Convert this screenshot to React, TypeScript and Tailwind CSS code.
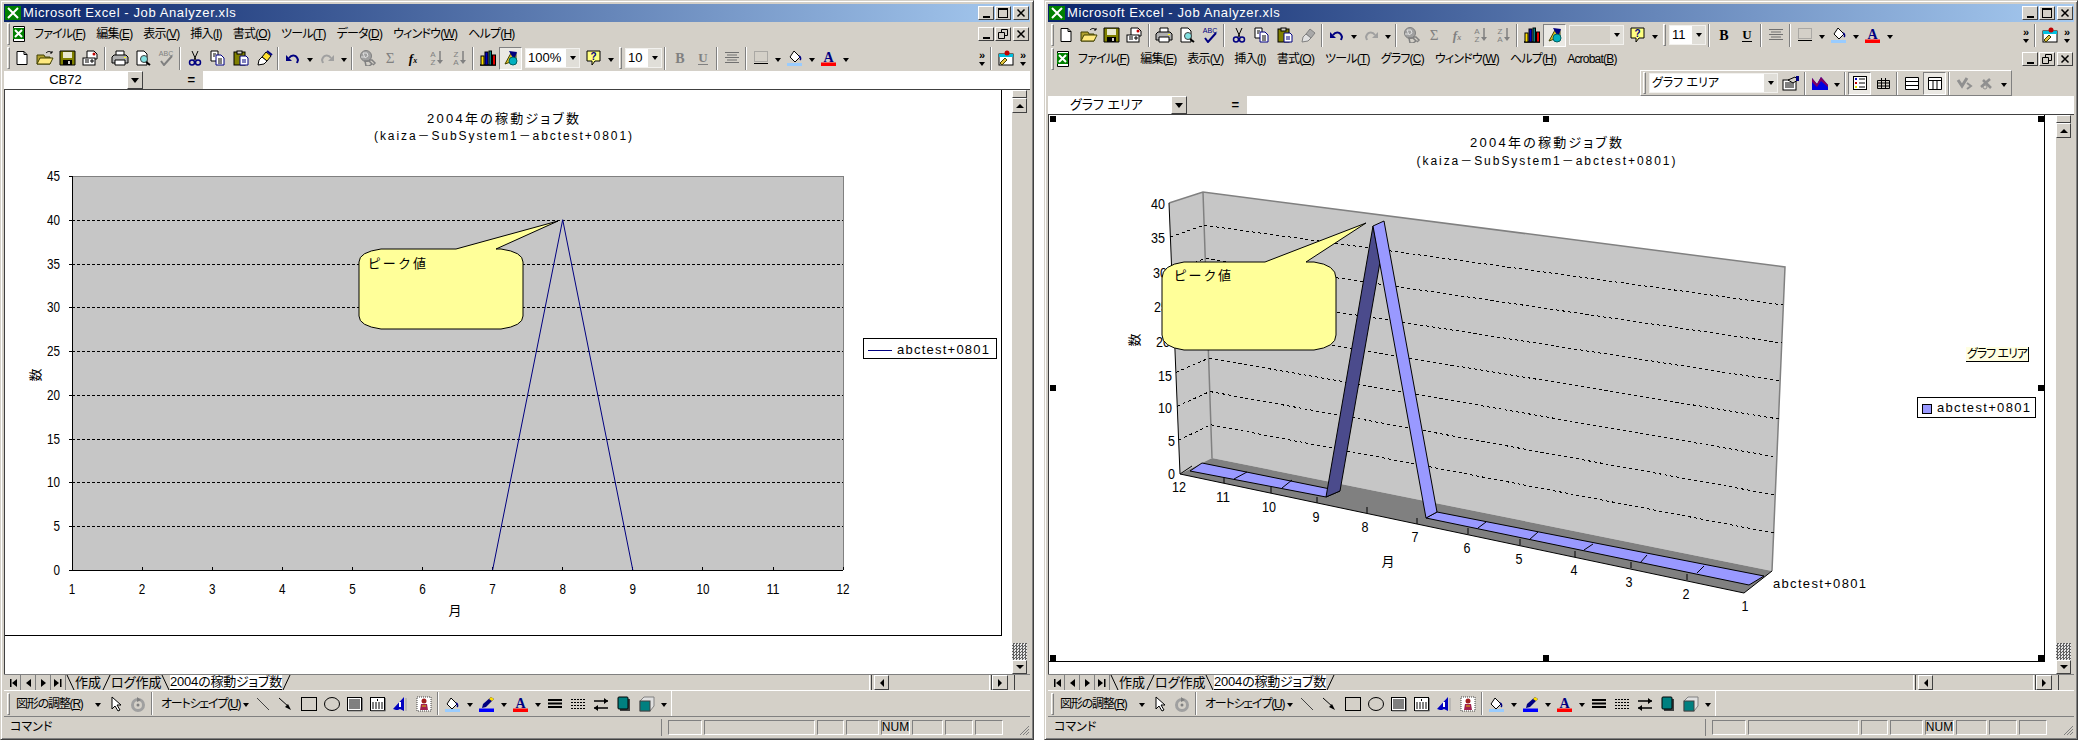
import type { ReactNode } from 'react'

const FACE = 'bg-[#d4d0c8]'
const RAISED = 'border border-t-white border-l-white border-r-[#404040] border-b-[#404040]'
const SUNKEN = 'border border-t-[#808080] border-l-[#808080] border-r-white border-b-white'

const ICONS: Record<string, ReactNode> = {
  new: <><path d="M5 1.5h7l3 3v10H5z" fill="#fff" stroke="#000" /><path d="M12 1.500v3h3" fill="none" stroke="#000" /></>,
  open: <><path d="M2 14V5h7l1 2h5v7z" fill="#b0a030" stroke="#404000" /><path d="M2 14l3-6h13l-3 6z" fill="#ffe97f" stroke="#404000" /><path d="M11 3c2-2 4-2 6 0M17 1v2h-2" fill="none" stroke="#000" /></>,
  save: <><path d="M2 1h15v14H2z" fill="#808000" stroke="#000" /><rect x="5" y="2" width="9" height="6" fill="#e8e8d0" /><rect x="5" y="10" width="9" height="5" fill="#000" /><rect x="10" y="11" width="2" height="3" fill="#d4d0c8" /></>,
  mail: <><path d="M6 1h7l3 3v5H6z" fill="#fff" stroke="#000" /><circle cx="13" cy="4" r="1.500" fill="#c00000" /><rect x="2" y="8" width="12" height="7" fill="#fff" stroke="#000" /><path d="M4 10h4M4 12h4M10 10h2v2h-2z" stroke="#000" fill="none" /></>,
  print: <><path d="M6 1h8v5H6z" fill="#fff" stroke="#000" /><path d="M2 7l2-2h12l2 2v6H2z" fill="#b0b0b0" stroke="#000" /><path d="M5 10h10v5H5z" fill="#fff" stroke="#000" /><rect x="14" y="7" width="2" height="1" fill="#ffff00" /></>,
  preview: <><path d="M4 1h7l3 3v11H4z" fill="#fff" stroke="#000" /><circle cx="11" cy="9" r="3.500" fill="#80e0e0" stroke="#404040" /><path d="M13 12l4 3" stroke="#000" strokeWidth="2" /></>,
  spell: <><text x="10" y="6" fontSize="7" textAnchor="middle" fill="#000080">ABC</text><path d="M5 11l3 4 8-9" fill="none" stroke="#000080" strokeWidth="2" /></>,
  spellOff: <><text x="10" y="6" fontSize="7" textAnchor="middle" fill="#808080">ABC</text><path d="M5 11l3 4 8-9" fill="none" stroke="#808080" strokeWidth="2" /></>,
  cut: <><path d="M7 1l4 9M13 1L9 10" stroke="#000" fill="none" /><circle cx="7" cy="12.500" r="2.500" fill="none" stroke="#000080" strokeWidth="1.500" /><circle cx="13" cy="12.500" r="2.500" fill="none" stroke="#000080" strokeWidth="1.500" /></>,
  copy: <><path d="M3 1h7v10H3z" fill="#fff" stroke="#000" /><path d="M8 5h5l3 3v7H8z" fill="#fff" stroke="#000080" /><path d="M5 4h3M5 6h2M10 9h4M10 11h4M10 13h4" stroke="#000" /></>,
  paste: <><rect x="3" y="2" width="11" height="13" fill="#808000" stroke="#000" /><rect x="6" y="1" width="5" height="3" fill="#d4d0c8" stroke="#000" /><path d="M9 6h6l2 2v7H9z" fill="#fff" stroke="#000080" /><path d="M11 10h4M11 12h4" stroke="#000080" /></>,
  brush: <><path d="M12 2l5 4-4 5-5-4z" fill="#ffe030" stroke="#000" /><path d="M8 7l5 4-3 3-6 1 1-5z" fill="#fff" stroke="#000" /><path d="M13 1l5 4" stroke="#000080" strokeWidth="2" /></>,
  brushOff: <><path d="M12 2l5 4-4 5-5-4z" fill="#a8a8a8" stroke="#808080" /><path d="M8 7l5 4-3 3-6 1 1-5z" fill="#e0e0e0" stroke="#808080" /></>,
  undo: <><path d="M6 8c3-4 8-3 9 2l-1 3" fill="none" stroke="#000080" strokeWidth="2" /><path d="M3 5v6h6z" fill="#000080" /></>,
  redo: <><path d="M14 8c-3-4-8-3-9 2l1 3" fill="none" stroke="#a0a0a0" strokeWidth="2" /><path d="M17 5v6h-6z" fill="#a0a0a0" /></>,
  web: <><circle cx="9" cy="6" r="5.500" fill="#a0a0a0" stroke="#808080" /><path d="M6 3h4l1 3-3 2zM4 7h3" stroke="#e0e0e0" fill="none" /><path d="M8 11h4l3 3-3 2H9zM12 10h3l3 3-2 2" fill="none" stroke="#808080" strokeWidth="1.500" /></>,
  sum: <text x="10" y="13" fontSize="15" textAnchor="middle" fill="#808080" fontFamily="Liberation Serif">Σ</text>,
  fx: <text x="10" y="13" fontSize="13" textAnchor="middle" fill="#000" fontFamily="Liberation Serif" fontStyle="italic" fontWeight="bold">f<tspan fontSize="8">x</tspan></text>,
  fxOff: <text x="10" y="13" fontSize="13" textAnchor="middle" fill="#808080" fontFamily="Liberation Serif" fontStyle="italic" fontWeight="bold">f<tspan fontSize="8">x</tspan></text>,
  az: <><text x="7" y="7" fontSize="8" textAnchor="middle" fill="#808080">A</text><text x="7" y="15" fontSize="8" textAnchor="middle" fill="#808080">Z</text><path d="M14 1v10" stroke="#808080" strokeWidth="1.500" /><path d="M11 10h6l-3 4z" fill="#808080" /></>,
  za: <><text x="7" y="7" fontSize="8" textAnchor="middle" fill="#808080">Z</text><text x="7" y="15" fontSize="8" textAnchor="middle" fill="#808080">A</text><path d="M14 1v10" stroke="#808080" strokeWidth="1.500" /><path d="M11 10h6l-3 4z" fill="#808080" /></>,
  chart: <><path d="M2 15h16" stroke="#000" strokeWidth="1.500" /><rect x="3" y="6" width="3" height="9" fill="#ffe000" stroke="#000" /><rect x="7" y="2" width="3" height="13" fill="#0000c0" stroke="#000" /><rect x="11" y="1" width="2.500" height="14" fill="#008080" stroke="#000" /><rect x="14.500" y="5" width="3" height="10" fill="#e00000" stroke="#000" /></>,
  drawing: <><path d="M4 14L10 3h5v7z" fill="#e0c020" stroke="#404000" /><path d="M8 1l8 1-3 8z" fill="#000080" /><circle cx="12" cy="11" r="4" fill="#00b0c0" stroke="#006060" /></>,
  help: <><path d="M3 1h13v10h-5l-3 4v-4H3z" fill="#ffff80" stroke="#000" /><text x="9.500" y="10" fontSize="10" textAnchor="middle" fill="#000080" fontWeight="bold">?</text></>,
  bold: <text x="10" y="13" fontSize="14" textAnchor="middle" fontWeight="bold" fontFamily="Liberation Serif">B</text>,
  boldOff: <text x="10" y="13" fontSize="14" textAnchor="middle" fontWeight="bold" fill="#808080" fontFamily="Liberation Serif">B</text>,
  under: <><text x="10" y="12" fontSize="13" textAnchor="middle" fontWeight="bold" fontFamily="Liberation Serif">U</text><path d="M5 14.500h10" stroke="#000" /></>,
  underOff: <><text x="10" y="12" fontSize="13" textAnchor="middle" fontWeight="bold" fill="#808080" fontFamily="Liberation Serif">U</text><path d="M5 14.500h10" stroke="#808080" /></>,
  align: <path d="M3 2.500h14M5 5h10M3 7.500h14M5 10h10M3 12.500h14" stroke="#707070" />,
  border: <><rect x="3.500" y="1.500" width="13" height="10" fill="none" stroke="#808080" strokeDasharray="1 1" /><path d="M3 13.500h14" stroke="#000" /></>,
  fill: <><path d="M9 1l6 6-5 5-5-5z" fill="#fff" stroke="#000" /><path d="M14 6c2 1 2 3 1 4" stroke="#000080" fill="none" strokeWidth="1.500" /><rect x="2" y="13" width="15" height="3" fill="#99ccff" /></>,
  color: <><text x="9.500" y="12" fontSize="14" textAnchor="middle" fontWeight="bold" fill="#000080" fontFamily="Liberation Serif">A</text><rect x="2" y="12.500" width="15" height="3.500" fill="#ff0000" /></>,
  newbar: <><rect x="3" y="4" width="14" height="11" fill="#fff" stroke="#000" /><rect x="3" y="4" width="14" height="3" fill="#00c0e0" /><circle cx="11" cy="3" r="2.500" fill="#c00000" /><path d="M4 13l5-5 2 2-5 5z" fill="#e0c040" stroke="#404000" /></>,
  cursor: <path d="M7 1v12l3-3 3 5 2-1-3-5h4z" fill="#fff" stroke="#000" />,
  rotate: <><circle cx="10" cy="9" r="5.500" fill="none" stroke="#a0a0a0" strokeWidth="3" /><circle cx="10" cy="9" r="1.500" fill="#808080" /><path d="M9 1l4 3-4 2z" fill="#808080" /></>,
  line: <path d="M4 2l12 12" stroke="#404040" />,
  arrow: <><path d="M3 2l10 9" stroke="#000" /><path d="M15 14l-6-3 3-3z" fill="#000" /></>,
  rect: <rect x="2.500" y="1.500" width="15" height="13" fill="none" stroke="#000" />,
  oval: <ellipse cx="10" cy="8" rx="7.500" ry="6.500" fill="none" stroke="#000" />,
  textbox: <><rect x="2.500" y="1.500" width="14" height="13" fill="#fff" stroke="#000" /><path d="M4 4h11M4 6h11M4 8h11M4 10h11M4 12h11" stroke="#000" /><path d="M17.500 2v13H3" stroke="#808080" fill="none" /></>,
  vtext: <><rect x="2.500" y="1.500" width="14" height="13" fill="#fff" stroke="#000" /><path d="M5 6v7M8 6v7M11 6v7M14 6v7M9.500 3v2" stroke="#000" /><path d="M17.500 2v13H3" stroke="#808080" fill="none" /></>,
  wordart: <><path d="M2 13L13 1v14l-4-2-2 1h-2z" fill="#0000c0" /><path d="M9 6v5" stroke="#fff" strokeWidth="2" /><path d="M15 2v13" stroke="#a0a0a0" /></>,
  clip: <><rect x="3" y="1" width="14" height="14" fill="#fff" stroke="#404040" strokeDasharray="1 1" /><circle cx="10" cy="5" r="2.500" fill="#a02020" /><path d="M7 8h6l1 6H6z" fill="#a02050" /><path d="M8 10h4" stroke="#e0c000" /></>,
  fillDraw: <><path d="M8 2l6 6-5 5-5-5z" fill="#fff" stroke="#000" /><path d="M13 7c2 1 2 3 1 4" stroke="#000080" fill="none" strokeWidth="1.500" /><rect x="2" y="13" width="15" height="3" fill="#99ccff" /></>,
  pen: <><path d="M14 1l3 2-8 8-4 1 1-4z" fill="#000080" /><path d="M14 1l3 2-2 2-3-2z" fill="#ffe000" /><rect x="2" y="12.500" width="15" height="3.500" fill="#0000ff" /></>,
  lineStyle: <path d="M3 4h14M3 7.500h14M3 11h14" stroke="#000" strokeWidth="2" />,
  dash: <><path d="M3 3.500h14M3 6.500h14M3 9.500h14M3 12.500h14" stroke="#000" strokeDasharray="2 1" /></>,
  arrows: <><path d="M3 5h14M3 12h14" stroke="#000" strokeWidth="1.500" /><path d="M13 2l4 3-4 3zM7 9l-4 3 4 3z" fill="#000" /></>,
  shadow: <><rect x="6" y="3" width="10" height="12" fill="#404040" strokeDasharray="1 1" /><rect x="4" y="1" width="10" height="12" rx="1" fill="#008080" stroke="#000" /></>,
  d3: <><path d="M3 5l4-4h10v9l-4 5H3z" fill="#e0e0e0" stroke="#808080" /><rect x="3" y="5" width="10" height="10" fill="#008080" stroke="#404040" /></>,
  props: <><rect x="2" y="5" width="13" height="10" fill="#fff" stroke="#000" /><path d="M4 8h9M4 10h9M4 12h9" stroke="#000" /><path d="M7 5l7-3 3 3-5 3z" fill="#d4d0c8" stroke="#000" /><rect x="15" y="1" width="3" height="5" fill="#000080" /></>,
  chartType: <><path d="M2 15V3l5 6 4-7 7 8v5z" fill="#0000e0" /><path d="M2 3l5 6 4-7 7 8v2l-7-6-4 6-5-5z" fill="#800060" /></>,
  legend: <><rect x="3.500" y="1.500" width="13" height="13" fill="#fff" stroke="#000" /><rect x="5" y="3" width="2" height="2" fill="#0000c0" /><rect x="5" y="7" width="2" height="2" fill="#c00000" /><rect x="5" y="11" width="2" height="2" fill="#e0e000" /><path d="M9 4h6M9 8h6M9 12h6" stroke="#000" /></>,
  table: <path d="M4.500 5.500h12v8h-12zM4.500 8h12M4.500 11h12M8.500 3v11M12.500 3v11" fill="none" stroke="#000" />,
  byRow: <path d="M3.500 2.500h13v12h-13zM3.500 6.500h13M3.500 10.500h13" fill="#fff" stroke="#000" />,
  byCol: <path d="M3.500 2.500h13v12h-13zM3.500 5.500h13M8 5.500v9M12 5.500v9" fill="#fff" stroke="#000" />,
  angleA: <><path d="M4 5l4 6 5-8" fill="none" stroke="#909090" strokeWidth="3" /><path d="M13 8l4 3-4 3" fill="none" stroke="#909090" strokeWidth="2" /></>,
  angleB: <><path d="M4 12l9-8M6 5l8 8" fill="none" stroke="#909090" strokeWidth="2.500" /><circle cx="8" cy="12" r="2" fill="none" stroke="#909090" /></>,
}

function Btn({ name, on }: { name: string; on?: boolean }) {
  return (
    <div className={`flex h-[23px] w-[23px] shrink-0 items-center justify-center ${on ? 'border border-t-[#808080] border-l-[#808080] border-r-white border-b-white bg-[#ebe9e4]' : ''}`}>
      <svg viewBox="0 0 20 16" width="20" height="16">{ICONS[name]}</svg>
    </div>
  )
}

function Dd() {
  return (
    <div className="flex h-[23px] w-[11px] shrink-0 items-center justify-center">
      <div className="mt-[3px] h-0 w-0 border-x-[3px] border-t-[4px] border-x-transparent border-t-black" />
    </div>
  )
}

function Sep() {
  return (
    <div className="flex h-[23px] w-[6px] shrink-0 justify-center">
      <div className="h-full w-[2px] border-l border-r border-l-[#808080] border-r-white" />
    </div>
  )
}

function Grip() {
  return <div className="h-[22px] w-[3px] shrink-0 border border-t-white border-l-white border-r-[#808080] border-b-[#808080]" />
}

function Chevrons({ className = '' }: { className?: string }) {
  return (
    <div className={`flex h-[23px] w-[12px] shrink-0 flex-col items-center justify-center ${className}`}>
      <span className="text-[11px] leading-[10px] font-bold">»</span>
      <div className="mt-[2px] h-0 w-0 border-x-[3px] border-t-[4px] border-x-transparent border-t-black" />
    </div>
  )
}

function Combo({ w, value, size = 'text-[13px]' }: { w: string; value?: string; size?: string }) {
  return (
    <div className={`flex h-[20px] shrink-0 items-center border border-[#f2f1ee] bg-[#d4d0c8] ${w}`}>
      <div className={`flex h-full flex-1 items-center overflow-hidden pl-[2px] whitespace-nowrap ${value ? 'bg-white' : 'bg-transparent'} ${size}`}>{value}</div>
      <div className="flex h-full w-[13px] items-center justify-center bg-[#e0ded8]">
        <div className="h-0 w-0 border-x-[3px] border-t-[4px] border-x-transparent border-t-black" />
      </div>
    </div>
  )
}

function Standard({ second, height }: { second?: boolean; height: string }) {
  return (
    <div className={`flex shrink-0 items-center pl-[3px] pr-[1px] ${height} ${FACE}`}>
      <Grip />
      <Btn name="new" /><Btn name="open" /><Btn name="save" /><Btn name="mail" />
      <Sep />
      <Btn name="print" /><Btn name="preview" /><Btn name={second ? 'spell' : 'spellOff'} />
      <Sep />
      <Btn name="cut" /><Btn name="copy" /><Btn name="paste" /><Btn name={second ? 'brushOff' : 'brush'} />
      <Sep />
      <Btn name="undo" /><Dd /><Btn name="redo" /><Dd />
      <Sep />
      <Btn name="web" /><Btn name="sum" /><Btn name={second ? 'fxOff' : 'fx'} /><Btn name="az" /><Btn name="za" />
      <Sep />
      <Btn name="chart" /><Btn name="drawing" on />
      <div className="ml-[3px] mr-[2px]"><Combo w="w-[55px]" value={second ? '' : '100%'} /></div>
      <Btn name="help" /><Dd />
      <div className="mx-[3px]"><Grip /></div>
      <Combo w="w-[37px]" value={second ? '11' : '10'} />
      <Sep />
      <Btn name={second ? 'bold' : 'boldOff'} /><Btn name={second ? 'under' : 'underOff'} />
      <Sep />
      <Btn name="align" />
      <Sep />
      <Btn name="border" /><Dd /><Btn name="fill" /><Dd /><Btn name="color" /><Dd />
      <Chevrons className="ml-auto" />
      <Sep />
      <Btn name="newbar" />
      <Chevrons />
    </div>
  )
}

function WinButtons({ restore }: { restore?: boolean }) {
  const box = `flex h-[14px] w-[16px] items-center justify-center ${RAISED} ${FACE}`
  return (
    <div className="ml-auto flex gap-[1px] pr-[1px]">
      <div className={`${box} items-end pb-[1px]`}><div className="h-[2px] w-[7px] bg-black" /></div>
      <div className={box}>
        {restore ? (
          <svg viewBox="0 0 10 10" width="10" height="10"><path d="M3.500 3V.5h6v6H7M.5 3.500h6v6h-6z" fill="none" stroke="#000" /></svg>
        ) : (
          <div className="h-[10px] w-[10px] border border-t-2 border-black" />
        )}
      </div>
      <div className={`${box} ml-[1px]`}>
        <svg viewBox="0 0 10 10" width="10" height="10"><path d="M1.500 1.500l7 7M8.500 1.500l-7 7" stroke="#000" strokeWidth="1.500" /></svg>
      </div>
    </div>
  )
}

function XlIcon({ doc }: { doc?: boolean }) {
  return (
    <svg viewBox="0 0 16 16" width="16" height="16" className="shrink-0">
      {doc && <path d="M1.500.5h11v15h-11z" fill="#fff" stroke="#000" />}
      <rect x={doc ? 1 : 0} y={doc ? 2 : 1} width="11" height="11" fill="#008000" />
      {!doc && <rect x="0" y="1" width="16" height="14" fill="#008000" />}
      <path d={doc ? 'M3 4l7 7M10 4l-7 7' : 'M3 3l10 10M13 3L3 13'} stroke="#fff" strokeWidth="2" />
    </svg>
  )
}

function Title() {
  return (
    <div className="flex h-[18px] shrink-0 items-center gap-[2px] bg-[linear-gradient(90deg,#0a246a,#a6caf0)] pl-[1px] text-[13px] text-white">
      <XlIcon />
      <span className="tracking-[0.6px] whitespace-nowrap">Microsoft Excel - Job Analyzer.xls</span>
      <WinButtons />
    </div>
  )
}

function Menu({ items, height }: { items: [string, string][]; height: string }) {
  return (
    <div className={`flex shrink-0 items-center pl-[3px] text-[12px] ${height} ${FACE}`}>
      <Grip />
      <div className="ml-[2px] mr-[6px]"><XlIcon doc /></div>
      <div className="flex gap-[11px] tracking-[-0.8px]">
        {items.map(([t, k]) => <span key={t} className="whitespace-nowrap">{t}(<u>{k}</u>)</span>)}
      </div>
      <WinButtons restore />
    </div>
  )
}

function Formula({ name, center }: { name: string; center?: boolean }) {
  return (
    <div className={`flex h-[18px] shrink-0 items-stretch ${FACE}`}>
      <div className={`flex w-[123px] items-center bg-white text-[13px] ${center ? 'justify-center' : 'pl-[22px]'}`}>{name}</div>
      <div className={`flex w-[16px] items-center justify-center ${RAISED} ${FACE}`}>
        <div className="h-0 w-0 border-x-[4px] border-t-[5px] border-x-transparent border-t-black" />
      </div>
      <div className="flex w-[60px] items-center justify-end pr-[8px] text-[13px] font-bold">=</div>
      <div className="flex-1 bg-white" />
    </div>
  )
}

function Arrow({ dir, className = '' }: { dir: 'up' | 'down' | 'left' | 'right'; className?: string }) {
  const shape = {
    up: 'border-x-[4px] border-b-[4px] border-x-transparent border-b-black',
    down: 'border-x-[4px] border-t-[4px] border-x-transparent border-t-black',
    left: 'border-y-[4px] border-r-[4px] border-y-transparent border-r-black',
    right: 'border-y-[4px] border-l-[4px] border-y-transparent border-l-black',
  }[dir]
  return (
    <div className={`flex shrink-0 items-center justify-center ${RAISED} ${FACE} ${className}`}>
      <div className={`h-0 w-0 ${shape}`} />
    </div>
  )
}

function VScroll({ top }: { top: number }) {
  return (
    <div className={`flex h-full w-[18px] shrink-0 flex-col border-r-[3px] border-[#d4d0c8]`}>
      <div className={`shrink-0 ${RAISED} ${FACE}`} style={{ height: top }} />
      <Arrow dir="up" className="h-[15px]" />
      <div className={`flex-1 ${FACE}`} />
      <div className="h-[17px] shrink-0 bg-[repeating-conic-gradient(#606060_0_25%,#e8e8e8_0_50%)] bg-[length:3px_3px]" />
      <Arrow dir="down" className="h-[14px]" />
    </div>
  )
}

function Slash({ back }: { back?: boolean }) {
  return (
    <svg viewBox="0 0 9 15" width="9" height="15" className="shrink-0">
      <path d={back ? 'M1 0l7 15' : 'M8 0L1 15'} stroke="#000" fill="none" />
    </svg>
  )
}

const NAV_ARROWS = ['M2 1h1.500v8H2zM9 1v8L4 5z', 'M8 1v8L3 5z', 'M3 1v8l5-4z', 'M1 1v8l5-4zM7 1h1.500v8H7z']

function Tabs() {
  return (
    <div className={`flex h-[16px] shrink-0 items-center border-t border-[#808080] ${FACE}`}>
      <div className="ml-[2px] flex items-center">
        {NAV_ARROWS.map(d => (
          <div key={d} className="flex h-[15px] w-[15px] items-center justify-center border-r border-[#808080]">
            <svg viewBox="0 0 10 10" width="10" height="10"><path d={d} fill="#000" /></svg>
          </div>
        ))}
      </div>
      <Slash back />
      <span className="w-[27px] text-[13px] leading-none whitespace-nowrap">作成</span>
      <Slash />
      <span className="w-[50px] text-[13px] leading-none whitespace-nowrap">ログ作成</span>
      <Slash back />
      <span className="h-[15px] w-[112px] border-b border-black bg-white text-[13px] leading-[14px] tracking-[-0.2px] whitespace-nowrap">2004の稼動ジョブ数</span>
      <Slash />
      <div className="ml-auto flex h-full items-center pr-[6px]">
        <div className="mr-[2px] h-[15px] w-[3px] border-x border-l-white border-r-[#404040]" />
        <Arrow dir="left" className="h-[15px] w-[15px]" />
        <div className="w-[100px]" />
        <div className="h-[15px] w-[3px] border-x border-l-white border-r-[#404040]" />
        <Arrow dir="right" className="h-[15px] w-[16px]" />
      </div>
      <div className="mr-[15px] h-[15px] w-[1px] bg-[#404040]" />
    </div>
  )
}

function DrawBar() {
  return (
    <div className={`flex h-[26px] shrink-0 items-center border-t border-white ${FACE}`}>
      <div className="flex h-full w-[668px] items-center border-r border-white pl-[3px] text-[12px]">
        <Grip />
        <span className="ml-[6px] w-[76px] tracking-[-1.2px] whitespace-nowrap">図形の調整(<u>R</u>)</span>
        <Dd />
        <Btn name="cursor" /><Btn name="rotate" />
        <Sep />
        <span className="ml-[6px] w-[79px] tracking-[-1.2px] whitespace-nowrap">オートシェイプ(<u>U</u>)</span>
        <Dd />
        <Btn name="line" /><Btn name="arrow" /><Btn name="rect" /><Btn name="oval" />
        <Btn name="textbox" /><Btn name="vtext" /><Btn name="wordart" /><Btn name="clip" />
        <Sep />
        <Btn name="fillDraw" /><Dd /><Btn name="pen" /><Dd /><Btn name="color" /><Dd />
        <Btn name="lineStyle" /><Btn name="dash" /><Btn name="arrows" /><Btn name="shadow" /><Btn name="d3" /><Dd />
      </div>
    </div>
  )
}

function Status() {
  const cells: [string, string][] = [
    ['w-[34px]', ''], ['w-[111px]', ''], ['w-[27px]', ''], ['w-[33px]', ''],
    ['w-[29px]', 'NUM'], ['w-[31px]', ''], ['w-[28px]', ''], ['w-[28px]', ''],
  ]
  return (
    <div className={`flex h-[21px] shrink-0 items-center border-t border-[#808080] pl-[6px] text-[12px] ${FACE}`}>
      <span className="w-[50px] whitespace-nowrap">コマンド</span>
      <div className="ml-[601px] mr-[6px] h-[17px] w-[1px] bg-[#808080]" />
      <div className="flex gap-[2px]">
        {cells.map(([w, t], i) => (
          <div key={i} className={`flex h-[15px] items-center justify-center leading-none ${SUNKEN} ${w}`}>{t}</div>
        ))}
      </div>
      <svg viewBox="0 0 12 12" width="12" height="12" className="ml-auto mt-[6px] shrink-0">
        <path d="M11 2L2 11M11 5l-6 6M11 8l-3 3" stroke="#808080" />
      </svg>
    </div>
  )
}

function Label({ x, y, t, anchor = 'middle', w, size = 14 }: { x: number; y: number; t: string; anchor?: 'start' | 'middle' | 'end'; w?: number; size?: number }) {
  return (
    <text x={x} y={y} textAnchor={anchor} dominantBaseline="central" fontSize={size} textLength={w} lengthAdjust={w ? 'spacing' : undefined}>{t}</text>
  )
}

function Num({ x, y, t, anchor = 'middle', cw = 6.500 }: { x: number; y: number; t: string; anchor?: 'start' | 'middle' | 'end'; cw?: number }) {
  return (
    <text x={x} y={y} textAnchor={anchor} dominantBaseline="central" fontSize={14} textLength={t.length * cw} lengthAdjust="spacingAndGlyphs">{t}</text>
  )
}

const px = (n: number) => 72 + (n - 1) * 70.1
const py = (v: number) => 570 - v * 8.756

function LineChart() {
  return (
    <svg viewBox="5 90 998 546" width="998" height="546" className="block">
      <Label x={503} y={118} t="2004年の稼動ジョブ数" w={152} size={13} />
      <Label x={503} y={136} t="(kaiza－SubSystem1－abctest+0801)" w={258} size={12} />
      <g shapeRendering="crispEdges">
        <rect x={72} y={176} width={771} height={394} fill="#c6c6c6" />
        <path d="M72 176h771v394" fill="none" stroke="#808080" />
        {[5, 10, 15, 20, 25, 30, 35, 40].map(v => (
          <line key={v} x1={72} x2={843} y1={Math.round(py(v))} y2={Math.round(py(v))} stroke="#000" strokeDasharray="3 2" />
        ))}
        <path d="M72 176v394h771" fill="none" stroke="#000" />
        {Array.from({ length: 12 }, (_, i) => (
          <line key={i} x1={px(i + 1)} x2={px(i + 1)} y1={567} y2={570} stroke="#000" />
        ))}
        {[0, 5, 10, 15, 20, 25, 30, 35, 40, 45].map(v => (
          <line key={v} x1={69} x2={72} y1={Math.round(py(v))} y2={Math.round(py(v))} stroke="#000" />
        ))}
      </g>
      <path d={`M${px(7)} 570L${px(8)} ${py(40)}L${px(9)} 570`} fill="none" stroke="#000080" />
      {[0, 5, 10, 15, 20, 25, 30, 35, 40, 45].map(v => (
        <Num key={v} x={60} y={py(v)} t={String(v)} anchor="end" />
      ))}
      {Array.from({ length: 12 }, (_, i) => (
        <Num key={i} x={px(i + 1)} y={589} t={String(i + 1)} />
      ))}
      <Label x={455} y={610} t="月" size={13} />
      <text x={35} y={375} fontSize={13} textAnchor="middle" dominantBaseline="central" transform="rotate(-90 35 375)">数</text>
      <path d="M381 249H456L558 221L496 249H501Q523 252 523 262V316Q523 326 501 329H381Q359 326 359 316V262Q359 252 381 249Z" fill="#ffff99" stroke="#000" />
      <Label x={368} y={263} t="ピーク値" anchor="start" w={58} size={13} />
      <rect x={863.500} y={338.500} width={133} height={20} fill="#fff" stroke="#000" />
      <path d="M868 350h24" stroke="#000080" shapeRendering="crispEdges" />
      <Label x={897} y={349} t="abctest+0801" anchor="start" w={92} size={13} />
      <path d="M1001.500 90v546M5 635.500h997" stroke="#000" shapeRendering="crispEdges" />
    </svg>
  )
}

// 3D view corners, interpolated by value 0..40
const frontAt = (v: number) => [1180 - (11 * v) / 40, 474 - (271 * v) / 40]
const backAt = (v: number) => [1212 - (9 * v) / 40, 458 - (266 * v) / 40]
const rightAt = (v: number) => [1772 + (13 * v) / 40, 571 - (304 * v) / 40]

const CAT_LABELS: [string, number, number][] = [
  ['12', 1179, 487], ['11', 1223, 497], ['10', 1269, 507], ['9', 1316, 517], ['8', 1365, 527], ['7', 1415, 537],
  ['6', 1467, 548], ['5', 1519, 559], ['4', 1574, 570], ['3', 1629, 582], ['2', 1686, 594], ['1', 1745, 606],
]
const FLOOR_TICKS: [number, number][] = [
  [1224, 483], [1271, 493], [1317, 503], [1367, 513], [1417, 524], [1468, 534], [1520, 545], [1575, 557], [1631, 568], [1687, 580],
]
const RIBBON_DIVS = [
  'M1247 472L1234 479', 'M1292 480L1282 488', 'M1486 522L1478 528', 'M1538 532L1529 540',
  'M1593 544L1584 550', 'M1647 555L1640 563', 'M1704 566L1697 573',
]
const VALUE_LABELS: [string, number, number][] = [
  ['40', 1165, 204], ['35', 1165, 238], ['30', 1167, 273], ['25', 1168, 307], ['20', 1170, 342],
  ['15', 1172, 376], ['10', 1172, 408], ['5', 1175, 441], ['0', 1175, 474],
]
const HANDLES: [number, number][] = [
  [1050, 116], [1543, 116], [2038, 116], [1050, 385], [2038, 385], [1050, 655], [1543, 655], [2038, 655],
]

function Chart3D() {
  return (
    <svg viewBox="1049 115 996 547" width="996" height="547" className="block">
      <Label x={1546} y={142} t="2004年の稼動ジョブ数" w={152} size={13} />
      <Label x={1546} y={161} t="(kaiza－SubSystem1－abctest+0801)" w={259} size={12} />
      {/* walls */}
      <path d="M1169 203L1203 192L1212 458L1180 474Z" fill="#c6c6c6" />
      <path d="M1203 192L1785 267L1772 571L1212 458Z" fill="#c6c6c6" />
      <path d="M1169 203L1203 192L1785 267L1772 571M1203 192L1212 458" fill="none" stroke="#808080" strokeWidth="1.500" />
      {[5, 10, 15, 20, 25, 30, 35].map(v => {
        const f = frontAt(v), b = backAt(v), r = rightAt(v)
        return <path key={v} d={`M${f[0]} ${f[1]}L${b[0]} ${b[1]}L${r[0]} ${r[1]}`} fill="none" stroke="#000" strokeDasharray="3 3" shapeRendering="crispEdges" />
      })}
      {/* floor */}
      <path d="M1180 474L1212 458L1772 571L1744 593Z" fill="#808080" />
      <path d="M1169 203L1180 474L1744 593L1772 571" fill="none" stroke="#000" />
      <path d="M1180 474L1192 466" stroke="#000" />
      {FLOOR_TICKS.map(([x, y]) => <line key={x} x1={x} y1={y} x2={x} y2={y - 6} stroke="#000" />)}
      {/* series ribbon */}
      <path d="M1202 463L1340 491L1326 497L1190 471Z" fill="#9999ff" stroke="#000" />
      <path d="M1437 512L1764 576L1749 585L1426 518Z" fill="#9999ff" stroke="#000" />
      {RIBBON_DIVS.map(d => <path key={d} d={d} stroke="#000" />)}
      <path d="M1373 226L1380 262L1340 491L1326 497Z" fill="#4b4b8c" stroke="#000" />
      <path d="M1373 226L1384 221L1437 512L1426 518Z" fill="#9999ff" stroke="#000" />
      {VALUE_LABELS.map(([t, x, y]) => <Num key={t} x={x} y={y} t={t} anchor="end" cw={7} />)}
      {CAT_LABELS.map(([t, x, y]) => <Num key={t} x={x} y={y} t={t} cw={7} />)}
      <Label x={1388} y={561} t="月" size={13} />
      <text x={1134} y={340} fontSize={13} textAnchor="middle" dominantBaseline="central" transform="rotate(-90 1134 340)">数</text>
      <Label x={1773} y={583} t="abctest+0801" anchor="start" w={93} size={13} />
      <path d="M1184 262H1265L1366 223L1306 262H1314Q1336 265 1336 278V335Q1336 347 1314 350H1184Q1162 347 1162 335V278Q1162 265 1184 262Z" fill="#ffff99" stroke="#000" />
      <Label x={1174} y={275} t="ピーク値" anchor="start" w={57} size={13} />
      <rect x={1917.500} y={397.500} width={118} height={20} fill="#fff" stroke="#000" />
      <rect x={1922.500} y={404.500} width={9} height={9} fill="#9999ff" stroke="#000" />
      <Label x={1937} y={407} t="abctest+0801" anchor="start" w={93} size={13} />
      <path d="M2044.500 115v547M1049 661.500h996" stroke="#000" shapeRendering="crispEdges" />
      {HANDLES.map(([x, y]) => <rect key={`${x}-${y}`} x={x} y={y} width={6} height={6} fill="#000" />)}
    </svg>
  )
}

function ChartBar() {
  return (
    <div className={`flex h-[26px] shrink-0 justify-end pr-[62px] ${FACE}`}>
      <div className="flex h-full w-[372px] items-center border border-t-white border-l-white border-r-[#808080] border-b-[#808080] pl-[2px]">
        <Grip />
        <div className="ml-[3px] mr-[1px]"><Combo w="w-[129px]" value="グラフ エリア" size="text-[12px]" /></div>
        <Btn name="props" />
        <Sep />
        <Btn name="chartType" /><Dd />
        <Sep />
        <Btn name="legend" on /><Btn name="table" />
        <Sep />
        <Btn name="byRow" /><Btn name="byCol" on />
        <Sep />
        <Btn name="angleA" /><Btn name="angleB" /><Dd />
      </div>
    </div>
  )
}

function Window({ className, children }: { className: string; children: ReactNode }) {
  return (
    <div className={`flex h-[740px] shrink-0 flex-col border border-t-[#d4d0c8] border-l-[#d4d0c8] border-r-[#404040] border-b-[#404040] p-[3px] shadow-[inset_1px_1px_0_#fff,inset_-1px_-1px_0_#808080] ${FACE} ${className}`}>
      {children}
    </div>
  )
}

const MENU_A: [string, string][] = [
  ['ファイル', 'F'], ['編集', 'E'], ['表示', 'V'], ['挿入', 'I'], ['書式', 'O'], ['ツール', 'T'], ['データ', 'D'], ['ウィンドウ', 'W'], ['ヘルプ', 'H'],
]
const MENU_B: [string, string][] = [
  ['ファイル', 'F'], ['編集', 'E'], ['表示', 'V'], ['挿入', 'I'], ['書式', 'O'], ['ツール', 'T'], ['グラフ', 'C'], ['ウィンドウ', 'W'], ['ヘルプ', 'H'], ['Acrobat', 'B'],
]

export default function App() {
  return (
    <div className="flex h-[740px] w-[2078px] gap-[10px] overflow-hidden bg-white font-['Liberation_Sans','Noto_Sans_CJK_JP',sans-serif] text-black [font-feature-settings:'palt']">
      <Window className="w-[1034px]">
        <Title />
        <div className="h-[1px] shrink-0" />
        <Menu items={MENU_A} height="h-[22px]" />
        <Standard height="h-[26px]" />
        <Formula name="CB72" center />
        <div className="flex h-[585px] shrink-0 border-t border-l border-[#404040] bg-white">
          <div className="flex-1 overflow-hidden"><LineChart /></div>
          <VScroll top={8} />
        </div>
        <Tabs />
        <DrawBar />
        <Status />
      </Window>
      <Window className="w-[1034px]">
        <Title />
        <div className="h-[1px] shrink-0" />
        <Standard second height="h-[24px]" />
        <Menu items={MENU_B} height="h-[23px]" />
        <ChartBar />
        <Formula name="グラフ エリア" />
        <div className="relative flex h-[560px] shrink-0 border-t border-l border-[#404040] bg-white">
          <div className="flex-1 overflow-hidden"><Chart3D /></div>
          <VScroll top={8} />
          <div className="absolute top-[232px] left-[917px] flex h-[15px] w-[63px] items-center justify-center border-r border-b border-black bg-[#ffffe1] text-[12px] leading-none tracking-[-1px] whitespace-nowrap">
            グラフ エリア
          </div>
        </div>
        <Tabs />
        <DrawBar />
        <Status />
      </Window>
    </div>
  )
}
